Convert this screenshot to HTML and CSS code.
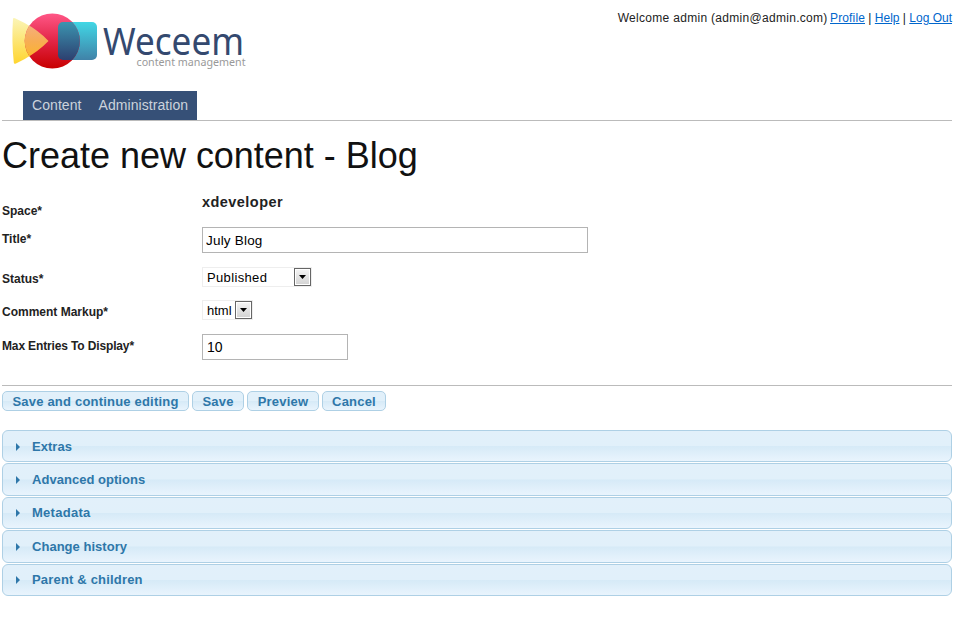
FILE: index.html
```html
<!DOCTYPE html>
<html lang="en">
<head>
<meta charset="utf-8">
<title>Create new content - Blog</title>
<link rel="stylesheet" href="styles.css">
</head>
<body>
<header class="header">
  <svg class="logo" width="250" height="80" viewBox="0 0 250 80" role="img" aria-label="Weceem content management">
    <defs>
      <linearGradient id="red" x1="0" y1="0" x2="0" y2="1"><stop offset="0" stop-color="#ff5787"/><stop offset=".5" stop-color="#e22546"/><stop offset="1" stop-color="#c80000"/></linearGradient>
      <linearGradient id="yellow" x1="0" y1="0" x2="0" y2="1"><stop offset="0" stop-color="#fbf5b8"/><stop offset="1" stop-color="#ffd52f"/></linearGradient>
      <linearGradient id="orange" x1="0" y1="0" x2="0" y2="1"><stop offset="0" stop-color="#f5b090"/><stop offset=".5" stop-color="#f7ad55"/><stop offset="1" stop-color="#fdb81e"/></linearGradient>
      <linearGradient id="cyan" x1="0" y1="0" x2="0" y2="1"><stop offset="0" stop-color="#41d7e5"/><stop offset="1" stop-color="#4082a8"/></linearGradient>
      <linearGradient id="navy" x1="0" y1="0" x2="0" y2="1"><stop offset="0" stop-color="#3b94b0"/><stop offset="1" stop-color="#2d4070"/></linearGradient>
      <clipPath id="disc"><circle cx="52.3" cy="41" r="27.6"/></clipPath>
    </defs>
    <path d="M13 18.5Q13.500 17.500 15 18.200Q35 27 48.500 41Q36 54 16 63.500Q14 64.500 13.800 62.500Q11.500 41 13 18.500Z" fill="url(#yellow)"/>
    <rect x="58" y="22" width="39" height="38" rx="5" fill="url(#cyan)"/>
    <circle cx="52.3" cy="41" r="27.6" fill="url(#red)"/>
    <g clip-path="url(#disc)">
      <path d="M13 18.5Q13.500 17.500 15 18.200Q35 27 48.500 41Q36 54 16 63.500Q14 64.500 13.800 62.500Q11.500 41 13 18.500Z" fill="url(#orange)"/>
      <rect x="58" y="22" width="39" height="38" rx="5" fill="url(#navy)"/>
    </g>
    <text class="brand" x="103" y="55" textLength="141" lengthAdjust="spacingAndGlyphs">Weceem</text>
    <text class="tagline" x="136.500" y="66" textLength="109" lengthAdjust="spacingAndGlyphs">content management</text>
  </svg>
  <p class="account"><span class="welcome">Welcome admin (admin@admin.com)</span> <a href="#">Profile</a> | <a href="#">Help</a> | <a href="#">Log Out</a></p>
</header>
<nav class="nav"><div class="tabs"><a href="#">Content</a><a href="#">Administration</a></div></nav>
<main>
  <h1>Create new content - Blog</h1>
  <form class="form">
    <div class="row space"><label>Space*</label><strong>xdeveloper</strong></div>
    <div class="row title"><label>Title*</label><input class="wide" value="July Blog"></div>
    <div class="row status"><label>Status*</label><div class="select large">Published<span class="arrow"><svg width="7" height="4"><path d="M0 0h7L3.500 4z"/></svg></span></div></div>
    <div class="row markup"><label>Comment Markup*</label><div class="select small">html<span class="arrow"><svg width="7" height="4"><path d="M0 0h7L3.500 4z"/></svg></span></div></div>
    <div class="row entries"><label>Max Entries To Display*</label><input class="short" value="10"></div>
  </form>
  <div class="actions">
    <button class="b1">Save and continue editing</button><button class="b2">Save</button><button class="b3">Preview</button><button class="b4">Cancel</button>
  </div>
  <div class="accordion">
    <h3 class="first"><svg width="4" height="8"><path d="M0 0l4 4-4 4z"/></svg><span class="tight">Extras</span></h3>
    <h3><svg width="4" height="8"><path d="M0 0l4 4-4 4z"/></svg><span class="tight">Advanced options</span></h3>
    <h3><svg width="4" height="8"><path d="M0 0l4 4-4 4z"/></svg><span class="loose">Metadata</span></h3>
    <h3><svg width="4" height="8"><path d="M0 0l4 4-4 4z"/></svg><span class="tight">Change history</span></h3>
    <h3><svg width="4" height="8"><path d="M0 0l4 4-4 4z"/></svg><span>Parent &amp; children</span></h3>
  </div>
</main>
</body>
</html>
```
FILE: styles.css
```css
* { box-sizing: border-box; }
body {
  margin: 0;
  padding: 0 11px 0 2px;
  background: #fff;
  color: #222;
  font: 13px/16px "Liberation Sans", Arial, sans-serif;
}
.header { display: flex; justify-content: space-between; height: 91px; }
.logo { margin-left: -2px; }
.brand { font: 37.5px "Noto Sans", sans-serif; fill: #34496f; }
.tagline { font: 11.5px "Noto Sans", sans-serif; fill: #999; }
.account { margin: 10px 0 0; font-size: 12px; white-space: nowrap; }
.welcome { letter-spacing: .3px; }
.account a { color: #06c; }
.account a:first-of-type { margin-left: -1px; letter-spacing: .14px; }
.nav { height: 30px; padding-left: 21px; border-bottom: 1px solid #bbb; }
.tabs { display: flex; gap: 17px; width: 174px; height: 29px; padding-left: 9px; background: #365077; }
.tabs a { color: #ccd3dc; font-size: 14px; line-height: 28px; text-decoration: none; letter-spacing: .07px; white-space: nowrap; }
h1 { margin: 0; height: 71px; padding-top: 14px; color: #111; font-size: 36px; font-weight: 400; line-height: 42px; letter-spacing: -.02px; white-space: nowrap; }
.form { height: 194px; border-bottom: 1px solid #bbb; }
.row { display: grid; grid-template-columns: 200px 1fr; align-items: start; }
.row label { font-size: 12px; font-weight: 700; }
.space { height: 35px; }
.space label { padding-top: 11px; }
.space strong { padding-top: 2px; font-size: 14.5px; letter-spacing: .45px; }
.title { height: 40px; }
.title label { padding-top: 4px; }
.status { height: 33px; }
.status label { padding-top: 4px; }
.markup { height: 34px; }
.markup label { padding-top: 4px; }
.entries label { padding-top: 4px; letter-spacing: -.14px; }
input { height: 26px; margin: 0; padding: 1px 3px 0; border: 1px solid #b4b4b4; background: #fff; color: #000; font: 13.5px "Liberation Sans", Arial, sans-serif; }
.wide { width: 386px; letter-spacing: .2px; }
.short { width: 146px; padding: 0 4px; font-size: 14px; }
.select { display: flex; justify-content: space-between; height: 20px; padding-left: 4px; border: 1px solid #eee; color: #000; line-height: 19px; }
.large { width: 110px; letter-spacing: .35px; }
.small { width: 51px; }
.arrow { display: flex; align-items: center; justify-content: center; width: 17px; height: 18px; border: 1px solid #666; background: linear-gradient(#f5f5f5, #d2d2d2); box-shadow: inset 0 0 0 1px #fff; }
.actions { display: flex; gap: 3px; height: 44px; padding-top: 5px; }
button, h3 {
  border: 1px solid #aed0e5;
  background: linear-gradient(#e2f0fa 0, #e1f0fa 49%, #d6eaf7 51%, #e9f4fd 100%);
  color: #2e77a9;
  font-family: "Liberation Sans", Arial, sans-serif;
  font-weight: 700;
}
button { height: 20px; margin: 0; padding: 1px 0 0; border-radius: 5px; font-size: 13px; line-height: 17px; white-space: nowrap; letter-spacing: .2px; }
.b1 { width: 187px; }
.b2 { width: 52px; }
.b3 { width: 72px; }
.b4 { width: 64px; }
.accordion { display: grid; grid-template-rows: 32px 33px 32px 33px 32px; gap: 1px; }
h3 { display: flex; align-items: center; gap: 12px; margin: 0; padding-left: 13px; border-radius: 6px; font-size: 13px; letter-spacing: .18px; }
h3 path { fill: #2e77a9; }
.first { padding-top: 1px; }
.tight { letter-spacing: .03px; }
.loose { letter-spacing: .28px; }
```
